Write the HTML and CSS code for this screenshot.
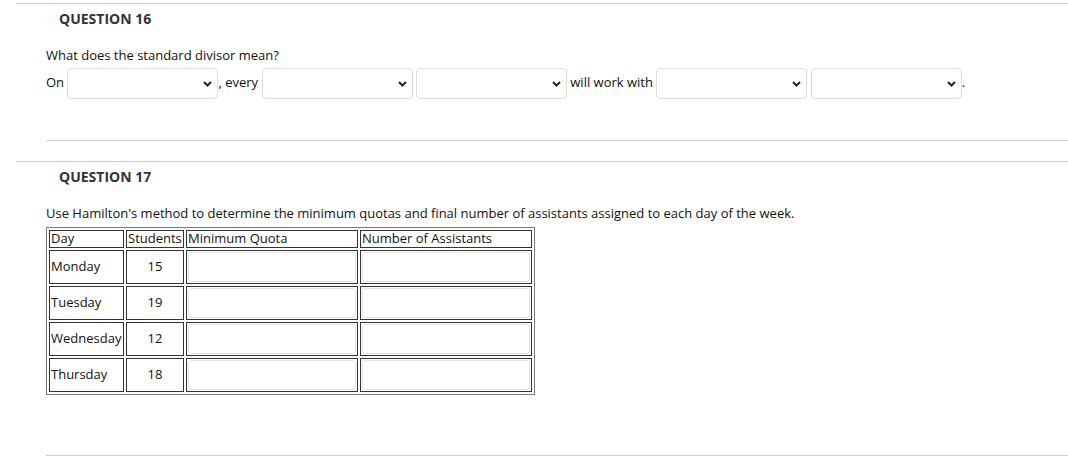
FILE: index.html
```html
<!DOCTYPE html>
<html>
<head>
<meta charset="utf-8">
<link rel="stylesheet" href="styles.css">
</head>
<body>
<div class="question">
  <h2 class="qtitle">QUESTION 16</h2>
  <div class="qbody">
    <p class="prompt">What does the standard divisor mean?</p>
    <div class="line">On <span class="sel"><svg class="chev" width="9" height="6" viewBox="0 0 9 6"><polyline points="1,1 4.5,4.5 8,1" fill="none" stroke="#222" stroke-width="2"/></svg></span>, every <span class="sel"><svg class="chev" width="9" height="6" viewBox="0 0 9 6"><polyline points="1,1 4.5,4.5 8,1" fill="none" stroke="#222" stroke-width="2"/></svg></span> <span class="sel"><svg class="chev" width="9" height="6" viewBox="0 0 9 6"><polyline points="1,1 4.5,4.5 8,1" fill="none" stroke="#222" stroke-width="2"/></svg></span> will work with <span class="sel"><svg class="chev" width="9" height="6" viewBox="0 0 9 6"><polyline points="1,1 4.5,4.5 8,1" fill="none" stroke="#222" stroke-width="2"/></svg></span> <span class="sel"><svg class="chev" width="9" height="6" viewBox="0 0 9 6"><polyline points="1,1 4.5,4.5 8,1" fill="none" stroke="#222" stroke-width="2"/></svg></span>.</div>
    <div class="divider"></div>
  </div>
</div>
<div class="question q2">
  <h2 class="qtitle">QUESTION 17</h2>
  <div class="qbody">
    <p class="prompt">Use Hamilton's method to determine the minimum quotas and final number of assistants assigned to each day of the week.</p>
    <table class="grid">
      <tr class="head">
        <td class="c-day">Day</td>
        <td class="c-stu">Students</td>
        <td class="c-in">Minimum Quota</td>
        <td class="c-in">Number of Assistants</td>
      </tr>
      <tr class="row">
        <td class="c-day">Monday</td>
        <td class="c-stu num">15</td>
        <td class="c-in"><span class="inp"></span></td>
        <td class="c-in"><span class="inp"></span></td>
      </tr>
      <tr class="row">
        <td class="c-day">Tuesday</td>
        <td class="c-stu num">19</td>
        <td class="c-in"><span class="inp"></span></td>
        <td class="c-in"><span class="inp"></span></td>
      </tr>
      <tr class="row">
        <td class="c-day">Wednesday</td>
        <td class="c-stu num">12</td>
        <td class="c-in"><span class="inp"></span></td>
        <td class="c-in"><span class="inp"></span></td>
      </tr>
      <tr class="row">
        <td class="c-day">Thursday</td>
        <td class="c-stu num">18</td>
        <td class="c-in"><span class="inp"></span></td>
        <td class="c-in"><span class="inp"></span></td>
      </tr>
    </table>
    <div class="divider bottom"></div>
  </div>
</div>
</body>
</html>
```

FILE: styles.css
```css
html, body {
  margin: 0;
  padding: 0;
  background: #fff;
}
body {
  padding-top: 3px;
  font-family: "Open Sans", "Liberation Sans", sans-serif;
  font-size: 13px;
  color: #111;
}
.question {
  margin-left: 16px;
  border-top: 1px solid #cdcdcd;
}
.q2 {
  margin-top: 20px;
}
.qtitle {
  margin: 6px 0 0 0;
  padding-left: 43px;
  font-size: 14px;
  font-weight: 700;
  line-height: 18px;
  color: #333;
}
.qbody {
  padding-left: 30px;
}
.prompt {
  margin: 18px 0 4px 0;
  line-height: 18px;
}
.line {
  line-height: 18px;
  white-space: nowrap;
}
.sel {
  display: inline-flex;
  box-sizing: border-box;
  width: 151px;
  height: 31px;
  vertical-align: middle;
  border: 1px solid #dedede;
  border-radius: 4px;
  background: #fff;
  align-items: center;
  justify-content: flex-end;
  padding-right: 5px;
}
.chev {
  display: block;
  margin-top: 1px;
}
.divider {
  margin-top: 41px;
  border-top: 1px solid #cdcdcd;
}
.grid {
  margin-top: 5px;
  border-collapse: separate;
  border-spacing: 2px;
  border: 1px solid #7a7a7a;
}
.grid td {
  border: 1px solid #333;
  padding: 0 1px 2px 1px;
  line-height: 14px;
  text-align: left;
  vertical-align: middle;
}
.grid .row td {
  height: 32px;
  padding: 0 1px 2px 1px;
  box-sizing: border-box;
}
.grid .row td.c-in {
  padding: 1px;
}
.c-day { width: 71px; }
.c-stu { width: 54px; }
.c-in { width: 168px; }
.grid .row td.c-day { width: 75px; height: 34px; }
.grid .row td.c-stu { width: 58px; height: 34px; }
.grid .row td.c-in { width: 172px; height: 34px; }
.grid .row td.num {
  text-align: center;
}
.inp {
  display: block;
  box-sizing: border-box;
  width: 168px;
  height: 30px;
  border: 1px solid #e2e2e2;
  border-radius: 3px;
  background: #fff;
}
.divider.bottom {
  margin-top: 60px;
}
```
